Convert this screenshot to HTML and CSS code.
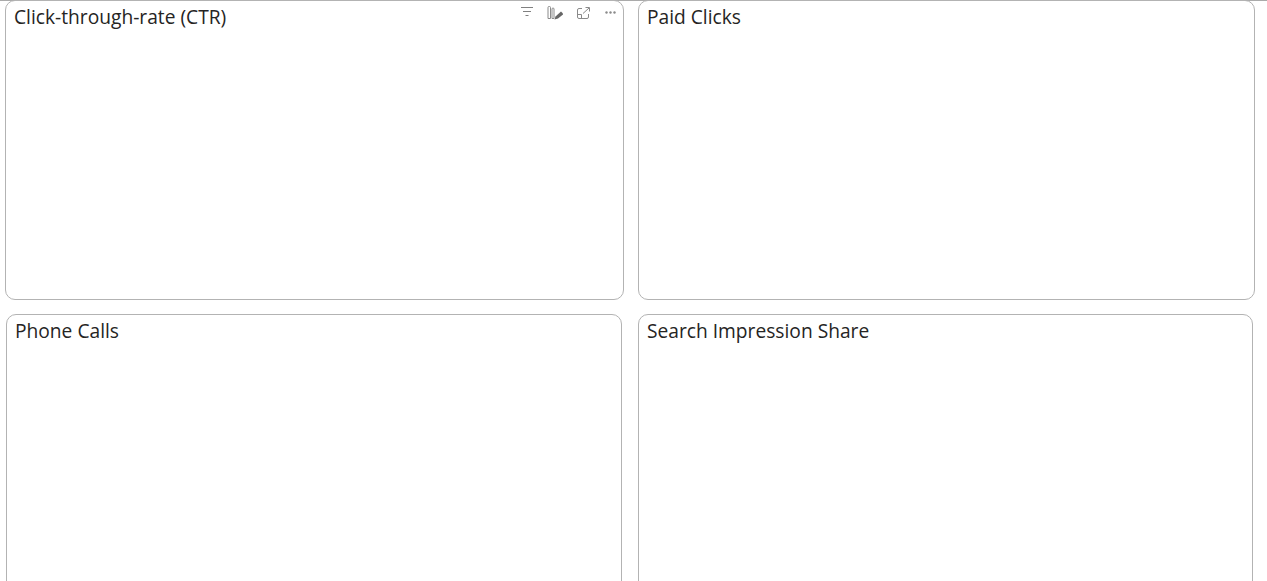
FILE: index.html
```html
<!DOCTYPE html>
<html lang="en">
  <head>
    <meta charset="UTF-8" />
    <meta name="viewport" content="width=device-width, initial-scale=1.0" />
    <title>Dashboard</title>
    <link rel="stylesheet" href="styles.css">
  </head>
  <body>
    <div class="row row-top">
      <section class="card card-ctr">
        <h2>Click-through-rate (CTR)</h2>
        <div class="toolbar">
          <svg width="12" height="14" viewBox="0 0 12 14" fill="none" stroke="#808080" stroke-width="1">
            <path d="M0 1.5H12M2 5.5H10M4.5 9.5H7.5" />
          </svg>
          <svg width="16" height="14" viewBox="0 0 16 14" fill="none" stroke="#8a8a8a" stroke-width="1">
            <path d="M1 1.5Q1 .5 2 .5H2.5Q3.5 .5 3.5 1.5V12.5H1ZM5 3Q5 2 6 2Q7 2 7 3V12.5H5Z" />
            <path d="M7.5 13.5L8.5 10.5L14 5.5L16.5 8L11 12.5Z" fill="#666" stroke="none" />
          </svg>
          <svg width="13" height="14" viewBox="0 0 13 14" fill="none" stroke="#8a8a8a" stroke-width="1">
            <path d="M5 2.5H2Q.5 2.5 .5 4V11Q.5 12.5 2 12.5H10Q11.5 12.5 11.5 11V8" />
            <path d="M.5 8.5H4.5V12.5M6 7.5L12 2M8.5 1.5H12.5V5.5" />
          </svg>
          <svg width="13" height="14" viewBox="0 0 13 14" fill="#8a8a8a">
            <circle cx="2.5" cy="6.5" r="1.2" />
            <circle cx="6.5" cy="6.5" r="1.2" />
            <circle cx="10.5" cy="6.5" r="1.2" />
          </svg>
        </div>
      </section>
      <section class="card card-clicks">
        <h2>Paid Clicks</h2>
      </section>
    </div>
    <div class="row row-bottom">
      <section class="card card-calls">
        <h2>Phone Calls</h2>
      </section>
      <section class="card card-share">
        <h2>Search Impression Share</h2>
      </section>
    </div>
  </body>
</html>
```

FILE: styles.css
```css
html,
body {
  height: 100%;
  overflow: hidden;
}
body {
  margin: 0;
  background-color: white;
  color: #252423;
  font-family: "Open Sans", "Noto Sans", sans-serif;
}
.row {
  display: flex;
}
.row-top {
  height: 300px;
  padding-left: 5px;
  gap: 14px;
  border-top: 1px solid #aaa;
  margin-bottom: 14px;
  box-sizing: border-box;
}
.row-bottom {
  height: 267px;
  padding-left: 6px;
  gap: 16px;
}
.card {
  position: relative;
  box-sizing: border-box;
  border: 1px solid #b3b3b3;
  border-radius: 10px;
  padding: 2px 8px;
}
.row-top .card {
  margin-top: -1px;
}
.row-bottom .card {
  height: 300px;
}
.card-ctr {
  width: 619px;
}
.card-clicks {
  width: 617px;
}
.card-calls {
  width: 616px;
}
.card-share {
  width: 615px;
}
h2 {
  margin: 0;
  font-size: 19.2px;
  font-weight: 400;
  line-height: 27px;
}
.toolbar {
  position: absolute;
  top: 5px;
  right: 6px;
  display: flex;
  align-items: flex-start;
  gap: 14px;
}
```
